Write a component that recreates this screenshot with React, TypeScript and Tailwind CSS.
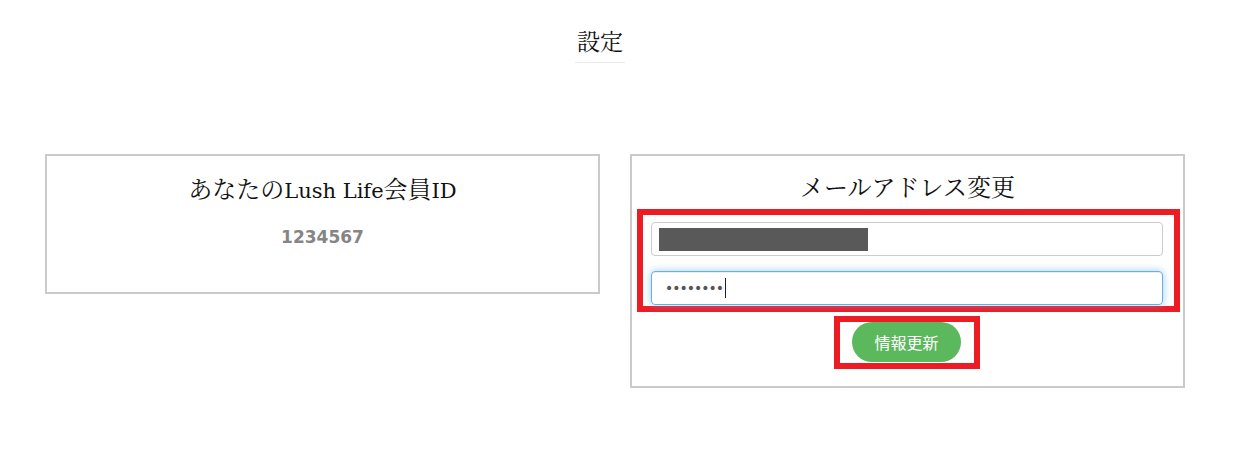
import React from "react";

const serif = "font-['DejaVu_Serif','Noto_Serif_CJK_JP','Noto_Sans_CJK_JP',serif]";

export default function App() {
  return (
    <div className="w-[1251px] h-[465px] bg-white text-[#111] font-['DejaVu_Sans','Noto_Sans_CJK_JP',sans-serif]">
      <div className="w-[1200px] flex flex-col items-center pt-[26px]">
        <h1 className={`text-[23px] leading-[32px] font-normal ${serif}`}>設定</h1>
        <div className="w-[50px] h-px bg-[#eaeaea] mt-[4px]" />
      </div>

      <div className="flex items-start gap-[30px] pl-[45px] mt-[91px]">
        <div className="w-[555px] h-[140px] border-2 border-[#cacaca] flex flex-col items-center pt-[20px]">
          <div className={`text-[21px] leading-[28px] ${serif} whitespace-nowrap`}>
            <span className="text-[24px]">あなたの</span>Lush Life<span className="text-[24px]">会員</span>ID
          </div>
          <div className="mt-[21px] text-[17px] leading-[22px] font-bold text-[#858585] font-['DejaVu_Sans',sans-serif]">
            1234567
          </div>
        </div>

        <div className="w-[555px] h-[234px] border-2 border-[#cacaca] flex flex-col pt-[18px]">
          <div className={`text-center text-[24px] leading-[28px] ${serif} whitespace-nowrap`}>
            メールアドレス変更
          </div>
          <div className="mt-[7px] ml-[5px] mr-[3px] border-[6px] border-[#ed1c24] pt-[7px] pl-[8px] pr-[11px] pb-[1px] flex flex-col gap-[15px]">
            <div className="h-[34px] border border-[#ccc] rounded-[4px] flex items-center pl-[7px]">
              <div className="w-[209px] h-[23px] bg-[#595959]" />
            </div>
            <div className="h-[34px] border border-[#66afe9] rounded-[4px] flex items-center pl-[13px] shadow-[inset_0_1px_1px_rgba(0,0,0,0.075),0_0_8px_rgba(102,175,233,0.6)]">
              <span className="text-[#555] text-[14px] leading-none tracking-[-1px]">••••••••</span>
              <span className="w-px h-[20px] bg-[#222] ml-[2px]" />
            </div>
          </div>
          <div className="self-center mt-[4px] border-[6px] border-[#ed1c24] pl-[12px] pr-[13px] pb-[1px] ml-[-1px]">
            <button className="w-[109px] h-[40px] rounded-full bg-[#5cb85c] text-white text-[16px] font-['Noto_Sans_CJK_JP',sans-serif] flex items-center justify-center">
              情報更新
            </button>
          </div>
        </div>
      </div>
    </div>
  );
}
